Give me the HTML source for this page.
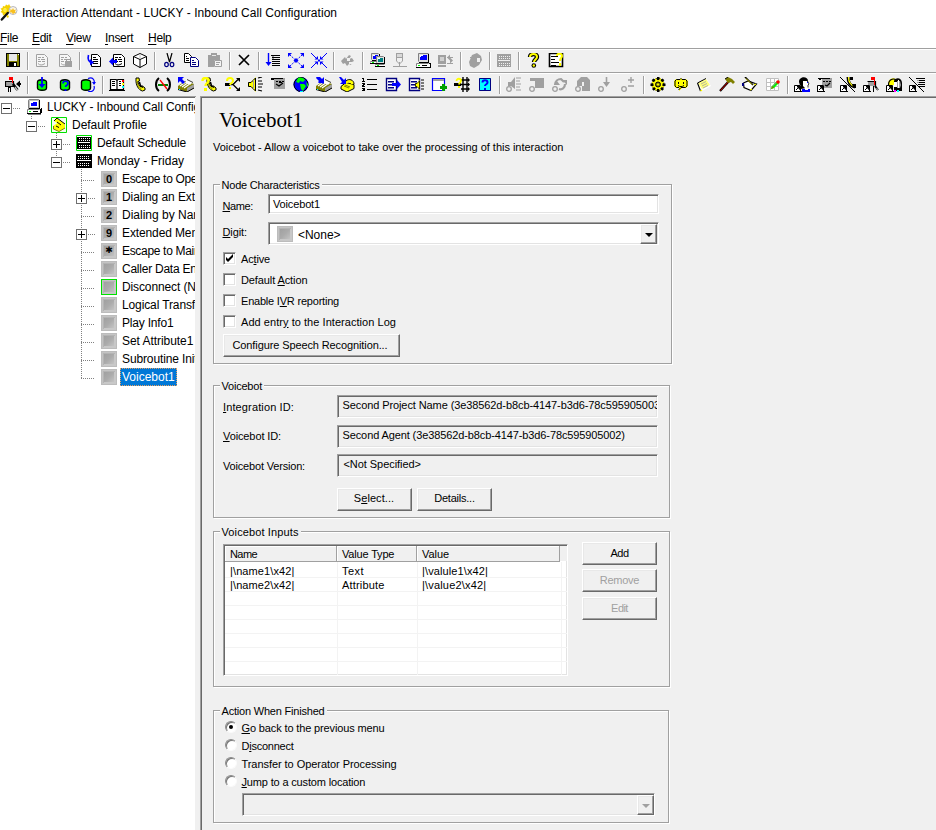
<!DOCTYPE html>
<html>
<head>
<meta charset="utf-8">
<title>Interaction Attendant - LUCKY - Inbound Call Configuration</title>
<style>
html,body{margin:0;padding:0;}
body{width:936px;height:830px;overflow:hidden;background:#f0f0f0;position:relative;font-family:"Liberation Sans",sans-serif;color:#000;}
.abs{position:absolute;}
.t{position:absolute;white-space:nowrap;line-height:1;}
u{text-decoration:underline;text-underline-offset:1px;}
.sg{font-size:12px;}
.tr{letter-spacing:-0.12px;}
.th{font-size:11px;}
svg.ic{position:absolute;overflow:hidden;}
.sep{position:absolute;width:1px;height:18px;background:#a0a0a0;box-shadow:1px 0 0 #fff;}
#title{left:0;top:0;width:936px;height:27px;background:#fff;}
#menu{left:0;top:27px;width:936px;height:21px;background:#fff;}
#tbs{left:0;top:48px;width:936px;height:48px;background:#f0f0f0;}
#tree{left:0;top:98px;width:195px;height:732px;background:#fff;overflow:hidden;}
#right{left:200px;top:96px;width:736px;height:734px;background:#f0f0f0;overflow:hidden;}
.exp{position:absolute;width:11px;height:11px;box-sizing:border-box;border:1px solid #707070;background:#fff;}
.exp i{position:absolute;left:1px;top:4px;width:7px;height:1px;background:#000;}
.exp b{position:absolute;left:4px;top:1px;width:1px;height:7px;background:#000;}
.hd{position:absolute;height:1px;background:repeating-linear-gradient(90deg,#808080 0 1px,transparent 1px 2px);}
.vd{position:absolute;width:1px;background:repeating-linear-gradient(180deg,#808080 0 1px,transparent 1px 2px);}
.key{position:absolute;width:16px;height:16px;box-sizing:border-box;border:1px solid #bcbcbc;background:linear-gradient(135deg,#9c9c9c 0%,#ababab 50%,#cdcdcd 100%);box-shadow:inset 1px 1px 0 #c4c4c4,inset -1px -1px 0 #c8c8c8,inset 2px 2px 0 #b4b4b4,inset -2px -2px 0 #c8c8c8;}
.key span{position:absolute;left:0;right:0;top:0;text-align:center;font-weight:bold;font-size:11px;line-height:14px;}
.key span.ast{font-family:"DejaVu Sans",sans-serif;font-size:9px;font-weight:normal;line-height:13px;}
.sel{position:absolute;height:18px;box-sizing:border-box;background:#0078d7;color:#fff;border:1px dotted #e8a060;padding:1px 1px 0 1px;white-space:nowrap;}
.sel span{line-height:15px;display:block;margin-top:0px;}
.grp{position:absolute;border:1px solid #a0a0a0;box-shadow:1px 1px 0 #fff, inset 1px 1px 0 #fff;box-sizing:border-box;}
.grp>.lbl{position:absolute;left:5.5px;top:-6px;background:#f0f0f0;padding:0 2px;font-size:11px;line-height:13px;white-space:nowrap;}
.sunk{position:absolute;box-sizing:border-box;border:1px solid;border-color:#a0a0a0 #fff #fff #a0a0a0;box-shadow:inset 1px 1px 0 #696969, inset -1px -1px 0 #e3e3e3;}
.btn{position:absolute;box-sizing:border-box;border:1px solid;border-color:#fff #696969 #696969 #fff;box-shadow:inset -1px -1px 0 #a0a0a0, inset 1px 1px 0 #e8e8e8;background:#f0f0f0;text-align:center;font-size:11px;}
.btn span{position:absolute;left:0;right:0;text-align:center;white-space:nowrap;line-height:13px;}
.cb{position:absolute;width:13px;height:13px;box-sizing:border-box;background:#fff;border:1px solid;border-color:#a0a0a0 #fff #fff #a0a0a0;box-shadow:inset 1px 1px 0 #696969, inset -1px -1px 0 #e3e3e3;}
.rd{position:absolute;width:12px;height:12px;box-sizing:border-box;border-radius:50%;background:#fff;border:1px solid;border-color:#8a8a8a #fafafa #fafafa #8a8a8a;box-shadow:inset 1px 1px 0 #767676;}
#list .hdc{border-right:1px solid #a0a0a0;border-bottom:1px solid #a0a0a0;box-sizing:border-box;box-shadow:inset 1px 1px 0 #fff;}
#grid{background:
 linear-gradient(#f3f3f3,#f3f3f3) 112px 0/1px 100% no-repeat,
 linear-gradient(#f3f3f3,#f3f3f3) 192px 0/1px 100% no-repeat,
 linear-gradient(#f3f3f3,#f3f3f3) 336px 0/1px 100% no-repeat,
 repeating-linear-gradient(180deg,transparent 0 13px,#f3f3f3 13px 14px) 0 2px;}
</style>
</head>
<body>
<div id="title" class="abs"><svg class="abs" style="left:0px;top:4px" width="18" height="18" viewBox="0 0 18 18"><path d="M3 2l2 .5 1-2 2 1 1-1.500 1 2 1 1-2 3 1 2-2 1-1 3-2-1.500-2 1-.5-2.500-2-1 1.500-1.500-1.500-2 2-.5z" fill="#f4d000"/><path d="M4 4l2 0 1 2-1 2-2 0-1-2z" fill="#ffee40"/><circle cx="13" cy="6.500" r="4" fill="#fbf6e8" stroke="#b8b8c0" stroke-width="1"/><path d="M10.500 5l1.500 1 1-2 1 2 2-.5-1 2 1 1.500-2 0-1 1.500-1-2-2 0z" fill="#f8c020"/><path d="M1.800 15.500l6-6.500" stroke="#111" stroke-width="2.400" stroke-linecap="round" fill="none"/><path d="M7 11l2 1-1 2-1.500-1z" fill="#f4d000"/></svg><div class="t sg" style="left:22px;top:6px;line-height:15px;letter-spacing:0.03px">Interaction Attendant - LUCKY - Inbound Call Configuration</div></div>
<div id="menu" class="abs"><div class="t sg" style="left:0px;top:4px;line-height:15px;letter-spacing:-0.3px"><u style="text-underline-offset:1.500px">F</u>ile</div><div class="t sg" style="left:32px;top:4px;line-height:15px;letter-spacing:-0.3px"><u style="text-underline-offset:1.500px">E</u>dit</div><div class="t sg" style="left:66px;top:4px;line-height:15px;letter-spacing:-0.3px"><u style="text-underline-offset:1.500px">V</u>iew</div><div class="t sg" style="left:105px;top:4px;line-height:15px;letter-spacing:-0.3px"><u style="text-underline-offset:1.500px">I</u>nsert</div><div class="t sg" style="left:148px;top:4px;line-height:15px;letter-spacing:-0.3px"><u style="text-underline-offset:1.500px">H</u>elp</div></div>
<div id="tbs" class="abs"><div class="abs" style="left:0;top:0;width:936px;height:1px;background:#a0a0a0"></div><div class="abs" style="left:0;top:1px;width:936px;height:1px;background:#fff"></div><div class="abs" style="left:0;top:24px;width:936px;height:1px;background:#a0a0a0"></div><div class="abs" style="left:0;top:25px;width:936px;height:1px;background:#fff"></div><svg class="ic" style="left:5px;top:5px" width="16" height="15" viewBox="0 0 16 15"><rect x="1" y="0" width="14" height="14" fill="#000"/><rect x="2" y="1" width="12" height="12" fill="#808000"/><rect x="4" y="1" width="8" height="7" fill="#e8e8e8"/><rect x="4" y="9" width="8" height="5" fill="#000"/><rect x="9" y="10" width="2" height="3" fill="#fff"/><rect x="13" y="1" width="1" height="1" fill="#fff"/></svg><div class="sep" style="left:27px;top:4px"></div><svg class="ic" style="left:34px;top:5px" width="16" height="15" viewBox="0 0 16 15"><path d="M2 1h9l3 3v10h-12z" fill="#f6f6f6"/><path d="M2.5 1.5h8l3 3v9h-11z" fill="none" stroke="#a0a0a0" stroke-width="1" /><rect x="4" y="4" width="3" height="1" fill="#a0a0a0"/><rect x="8" y="4" width="2" height="1" fill="#a0a0a0"/><rect x="4" y="6" width="2" height="1" fill="#a0a0a0"/><rect x="7" y="6" width="4" height="1" fill="#a0a0a0"/><rect x="4" y="8" width="3" height="1" fill="#a0a0a0"/><rect x="8" y="8" width="3" height="1" fill="#a0a0a0"/><path d="M4 10.5c2 2 4 2 7 0" fill="none" stroke="#a0a0a0" stroke-width="1" /></svg><svg class="ic" style="left:57px;top:5px" width="16" height="15" viewBox="0 0 16 15"><path d="M2 1h9l3 3v10h-12z" fill="#f6f6f6"/><path d="M2.5 1.5h8l3 3v9h-11z" fill="none" stroke="#a0a0a0" stroke-width="1" /><rect x="4" y="4" width="3" height="1" fill="#a0a0a0"/><rect x="8" y="4" width="2" height="1" fill="#a0a0a0"/><rect x="4" y="6" width="2" height="1" fill="#a0a0a0"/><rect x="7" y="6" width="4" height="1" fill="#a0a0a0"/><rect x="4" y="8" width="3" height="1" fill="#a0a0a0"/><rect x="8" y="8" width="3" height="1" fill="#a0a0a0"/><path d="M4 10.5c2 2 4 2 7 0" fill="none" stroke="#a0a0a0" stroke-width="1" /><rect x="8" y="8" width="7" height="6" fill="#a0a0a0"/><rect x="9" y="6" width="5" height="3" fill="#a0a0a0"/><rect x="10" y="7" width="3" height="1" fill="#f0f0f0"/></svg><div class="sep" style="left:79px;top:4px"></div><svg class="ic" style="left:86px;top:5px" width="16" height="15" viewBox="0 0 16 15"><path d="M5 1h7l3 3v10h-10z" fill="#fff"/><path d="M5.5 1.5h6l3 3v9h-9z" fill="none" stroke="#000" stroke-width="1" /><rect x="7" y="4" width="3" height="1" fill="#000"/><rect x="7" y="6" width="5" height="1" fill="#000"/><rect x="7" y="8" width="5" height="1" fill="#000"/><rect x="7" y="10" width="5" height="1" fill="#000"/><path d="M2.5 2c-1 4 0 7 3.5 7.5" fill="none" stroke="#0000ff" stroke-width="1.6" /><path d="M4 6l4 3.5-4 3z" fill="#0000ff"/></svg><svg class="ic" style="left:109px;top:5px" width="16" height="15" viewBox="0 0 16 15"><path d="M4 1h9l3 3v10h-12z" fill="#fff"/><path d="M4.5 1.5h8l3 3v9h-11z" fill="none" stroke="#000" stroke-width="1" /><rect x="6" y="4" width="3" height="1" fill="#000"/><rect x="10" y="4" width="2" height="1" fill="#000"/><rect x="6" y="6" width="2" height="1" fill="#000"/><rect x="9" y="6" width="4" height="1" fill="#000"/><rect x="6" y="8" width="3" height="1" fill="#000"/><rect x="10" y="8" width="3" height="1" fill="#000"/><path d="M6 10.5c2 2 4 2 7 0" fill="none" stroke="#000" stroke-width="1" /><path d="M0 8.5l4-4v2.500h4v3h-4v2.5z" fill="#0000ff"/></svg><svg class="ic" style="left:132px;top:5px" width="16" height="15" viewBox="0 0 16 15"><path d="M8 0l7 3v8l-7 4-7-4v-8z" fill="#fff"/><path d="M8 .5l6.500 3v7.500l-6.500 3.500-6.500-3.500v-7.500z M1.5 3.500l6.500 3 6.500-3 M8 6.500v8" fill="none" stroke="#000" stroke-width="1" /><path d="M8 1v5" fill="none" stroke="#c0c0c0" stroke-width="1" /></svg><div class="sep" style="left:154px;top:4px"></div><svg class="ic" style="left:161px;top:5px" width="16" height="15" viewBox="0 0 16 15"><path d="M6 0l2.500 9M11 0l-2.500 9" fill="none" stroke="#000" stroke-width="1.2" /><ellipse cx="5.5" cy="11.5" rx="1.8" ry="2.2" fill="none" stroke="#000080" stroke-width="1.2"/><ellipse cx="11" cy="11.5" rx="1.8" ry="2.2" fill="none" stroke="#000080" stroke-width="1.2"/></svg><svg class="ic" style="left:184px;top:5px" width="16" height="15" viewBox="0 0 16 15"><path d="M0 0h5l3 3v7h-8z" fill="#fff"/><path d="M0.5 0.5h4l3 3v6h-7z" fill="none" stroke="#000" stroke-width="1" /><rect x="2" y="3" width="1" height="1" fill="#000"/><rect x="2" y="5" width="3" height="1" fill="#000"/><rect x="2" y="7" width="3" height="1" fill="#000"/><path d="M6 4h6l3 3v7h-9z" fill="#fff"/><path d="M6.5 4.5h5l3 3v6h-8z" fill="none" stroke="#000080" stroke-width="1" /><rect x="8" y="7" width="2" height="1" fill="#000080"/><rect x="8" y="9" width="4" height="1" fill="#000080"/><rect x="8" y="11" width="4" height="1" fill="#000080"/></svg><svg class="ic" style="left:207px;top:5px" width="16" height="15" viewBox="0 0 16 15"><rect x="1" y="2" width="12" height="12" fill="#a0a0a0"/><rect x="4" y="0" width="6" height="3" fill="#a0a0a0"/><rect x="5" y="2" width="4" height="1" fill="#e8e8e8"/><rect x="7" y="7" width="8" height="7" fill="#f4f4f4"/><path d="M7.500 7.500h7v6h-7z" fill="none" stroke="#a0a0a0" stroke-width="1" /><rect x="9" y="9" width="4" height="1" fill="#a0a0a0"/><rect x="9" y="11" width="3" height="1" fill="#a0a0a0"/></svg><div class="sep" style="left:229px;top:4px"></div><svg class="ic" style="left:236px;top:5px" width="16" height="15" viewBox="0 0 16 15"><path d="M3 2l10 10M13 2l-10 10" fill="none" stroke="#000" stroke-width="1.7" /></svg><div class="sep" style="left:258px;top:4px"></div><svg class="ic" style="left:265px;top:5px" width="16" height="15" viewBox="0 0 16 15"><path d="M3.500 0v11" fill="none" stroke="#0000ff" stroke-width="1.4" /><path d="M0.500 9h6l-3 4z" fill="#0000ff"/><rect x="6" y="2" width="9" height="1" fill="#000"/><rect x="7" y="4" width="8" height="1" fill="#000"/><rect x="7" y="6" width="8" height="1" fill="#000"/><rect x="7" y="8" width="8" height="1" fill="#000"/><rect x="7" y="10" width="8" height="1" fill="#000"/><rect x="7" y="12" width="8" height="1" fill="#000"/><rect x="7" y="3" width="2" height="1" fill="#a0a0a0"/><rect x="7" y="5" width="2" height="1" fill="#a0a0a0"/></svg><svg class="ic" style="left:288px;top:5px" width="16" height="15" viewBox="0 0 16 15"><path d="M2 2l12 11M14 2l-12 11" fill="none" stroke="#0000ff" stroke-width="1" stroke-dasharray="1.5 1"/><path d="M0 0h4l-4 4zM16 0h-4l4 4zM0 15h4l-4-4zM16 15h-4l4-4z" fill="#0000ff"/><path d="M8 5l2.500 2.500-2.500 2.500-2.500-2.500z" fill="#0000ff"/></svg><svg class="ic" style="left:311px;top:5px" width="16" height="15" viewBox="0 0 16 15"><path d="M0 0l5 5M16 0l-5 5M0 15l5-5M16 15l-5-5" fill="none" stroke="#0000ff" stroke-width="1" /><path d="M3.500 6.500h3.500v-3.500zM12.500 6.500h-3.500v-3.500zM3.500 8.500h3.500v3.500zM12.500 8.500h-3.500v3.500z" fill="#0000ff"/><rect x="7" y="6.5" width="2" height="2" fill="#0000ff"/></svg><div class="sep" style="left:333px;top:4px"></div><svg class="ic" style="left:340px;top:5px" width="16" height="15" viewBox="0 0 16 15"><path d="M1 8l4-4 1 2 3-4 2 1-2 3 3-1 2 3-2 1-1 3-2-1-2 2-2-3-2 1z" fill="#a0a0a0"/><rect x="7" y="5" width="3" height="3" fill="#f0f0f0"/><rect x="9" y="9" width="3" height="2" fill="#f0f0f0"/></svg><div class="sep" style="left:362px;top:4px"></div><svg class="ic" style="left:369px;top:5px" width="16" height="15" viewBox="0 0 16 15"><rect x="2" y="0" width="8" height="7" fill="#e0e0e0"/><path d="M2.5 6.5v-6h7" fill="none" stroke="#808080" stroke-width="1" /><rect x="10" y="1" width="1" height="7" fill="#000"/><rect x="3" y="7" width="8" height="1" fill="#000"/><rect x="4" y="2" width="5" height="4" fill="#0000ff"/><rect x="4" y="2" width="2" height="1" fill="#fff"/><rect x="1" y="8" width="10" height="2" fill="#fff"/><path d="M1.5 9.5v-1h9" fill="none" stroke="#808080" stroke-width="1" /><rect x="11" y="8" width="1" height="3" fill="#000"/><rect x="1" y="10" width="11" height="1" fill="#000"/><rect x="3" y="9" width="2" height="1" fill="#00ff00"/><rect x="7" y="3" width="8" height="7" fill="#e0e0e0"/><path d="M7.5 9.5v-6h7" fill="none" stroke="#808080" stroke-width="1" /><rect x="15" y="4" width="1" height="7" fill="#000"/><rect x="8" y="10" width="8" height="1" fill="#000"/><rect x="9" y="5" width="5" height="4" fill="#008080"/><rect x="9" y="5" width="2" height="1" fill="#fff"/><rect x="6" y="11" width="10" height="2" fill="#fff"/><path d="M6.5 12.5v-1h9" fill="none" stroke="#808080" stroke-width="1" /><rect x="16" y="11" width="1" height="3" fill="#000"/><rect x="6" y="13" width="11" height="1" fill="#000"/><rect x="8" y="12" width="2" height="1" fill="#00ff00"/></svg><svg class="ic" style="left:392px;top:5px" width="16" height="15" viewBox="0 0 16 15"><rect x="4" y="0" width="7" height="5" fill="#a0a0a0"/><rect x="5" y="1" width="5" height="3" fill="#d8d8d8"/><path d="M4.500 5v3l3 3M10.500 5v3l-3 3M7.500 9v5" fill="none" stroke="#a0a0a0" stroke-width="1" /><rect x="1" y="13" width="14" height="1" fill="#a0a0a0"/></svg><svg class="ic" style="left:415px;top:5px" width="16" height="15" viewBox="0 0 16 15"><rect x="3" y="0" width="11" height="9" fill="#e0e0e0"/><path d="M3.500 8.500v-8h10" fill="none" stroke="#808080" stroke-width="1" /><rect x="13" y="1" width="1" height="9" fill="#000"/><rect x="4" y="9" width="10" height="1" fill="#000"/><rect x="5" y="2" width="7" height="5" fill="#0000ff"/><rect x="5" y="2" width="3" height="1" fill="#fff"/><rect x="5" y="3" width="1" height="1" fill="#fff"/><rect x="1" y="10" width="14" height="4" fill="#fff"/><path d="M1.500 13.500v-3h12" fill="none" stroke="#808080" stroke-width="1" /><rect x="3" y="12" width="2" height="1" fill="#00ff00"/><rect x="7" y="12" width="5" height="1" fill="#000"/><rect x="1" y="14" width="15" height="1" fill="#000"/><rect x="15" y="10" width="1" height="5" fill="#000"/><rect x="14" y="10" width="1" height="1" fill="#000"/></svg><svg class="ic" style="left:438px;top:5px" width="16" height="15" viewBox="0 0 16 15"><rect x="0" y="2" width="8" height="9" fill="#a0a0a0"/><rect x="2" y="4" width="4" height="4" fill="#d0d0d0"/><rect x="0" y="12" width="8" height="2" fill="#a0a0a0"/><path d="M9 4.500h6M9 10.500h6" fill="none" stroke="#a0a0a0" stroke-width="1.2" /><path d="M15 7.500l-3 3v-6zM9 4.500l3-3v6z" fill="#a0a0a0"/></svg><div class="sep" style="left:460px;top:4px"></div><svg class="ic" style="left:467px;top:5px" width="16" height="15" viewBox="0 0 16 15"><path d="M2 9l3-7 5-2 4 3 1 4-3 5-5 3-4-2z" fill="#a0a0a0"/><rect x="10" y="5" width="3" height="4" fill="#f0f0f0"/><path d="M3 4l5 5M5 2l5 5" fill="none" stroke="#a0a0a0" stroke-width="1" /></svg><div class="sep" style="left:489px;top:4px"></div><svg class="ic" style="left:496px;top:5px" width="16" height="15" viewBox="0 0 16 15"><rect x="1" y="1" width="14" height="13" fill="#a0a0a0"/><rect x="3" y="3" width="1" height="1" fill="#f0f0f0"/><rect x="5" y="3" width="1" height="1" fill="#f0f0f0"/><rect x="7" y="3" width="1" height="1" fill="#f0f0f0"/><rect x="9" y="3" width="1" height="1" fill="#f0f0f0"/><rect x="11" y="3" width="1" height="1" fill="#f0f0f0"/><rect x="13" y="3" width="1" height="1" fill="#f0f0f0"/><rect x="3" y="5" width="1" height="1" fill="#f0f0f0"/><rect x="5" y="5" width="1" height="1" fill="#f0f0f0"/><rect x="7" y="5" width="1" height="1" fill="#f0f0f0"/><rect x="9" y="5" width="1" height="1" fill="#f0f0f0"/><rect x="11" y="5" width="1" height="1" fill="#f0f0f0"/><rect x="13" y="5" width="1" height="1" fill="#f0f0f0"/><rect x="3" y="10" width="1" height="1" fill="#f0f0f0"/><rect x="5" y="10" width="1" height="1" fill="#f0f0f0"/><rect x="7" y="10" width="1" height="1" fill="#f0f0f0"/><rect x="9" y="10" width="1" height="1" fill="#f0f0f0"/><rect x="11" y="10" width="1" height="1" fill="#f0f0f0"/><rect x="13" y="10" width="1" height="1" fill="#f0f0f0"/><rect x="3" y="12" width="1" height="1" fill="#f0f0f0"/><rect x="5" y="12" width="1" height="1" fill="#f0f0f0"/><rect x="7" y="12" width="1" height="1" fill="#f0f0f0"/><rect x="9" y="12" width="1" height="1" fill="#f0f0f0"/><rect x="11" y="12" width="1" height="1" fill="#f0f0f0"/><rect x="13" y="12" width="1" height="1" fill="#f0f0f0"/><rect x="2" y="7" width="12" height="1" fill="#f0f0f0"/></svg><div class="sep" style="left:518px;top:4px"></div><svg class="ic" style="left:525px;top:5px" width="16" height="15" viewBox="0 0 16 15"><path d="M5 4c0-4 7-4 7 0 0 2-3 3-3 5" fill="none" stroke="#000" stroke-width="4.4" /><path d="M5 4c0-4 7-4 7 0 0 2-3 3-3 5" fill="none" stroke="#ffff00" stroke-width="2" /><circle cx="8.8" cy="12.5" r="2.3" fill="#000"/><circle cx="8.8" cy="12.5" r="1.2" fill="#ffff00"/></svg><svg class="ic" style="left:548px;top:5px" width="16" height="15" viewBox="0 0 16 15"><rect x="1" y="0" width="14" height="14" fill="#fff"/><path d="M1.500 .5h13v13h-13z" fill="none" stroke="#000" stroke-width="1.6" /><rect x="3" y="3" width="7" height="1" fill="#000"/><rect x="3" y="6" width="4" height="1" fill="#000"/><rect x="3" y="9" width="8" height="1" fill="#000"/><rect x="3" y="12" width="5" height="1" fill="#000"/><path d="M9 3c0-3 5-3 5 0 0 2-2 2-2 5" fill="none" stroke="#ffff00" stroke-width="2" /><rect x="11" y="10" width="2" height="3" fill="#ffff00"/></svg>
<svg class="ic" style="left:5px;top:29px" width="16" height="15" viewBox="0 0 16 15"><rect x="0" y="5" width="9" height="5" fill="#a0a0a0"/><path d="M.5 4.500h8v5h-8z" fill="none" stroke="#000" stroke-width="1.2" /><rect x="4" y="0" width="4" height="3" fill="#ff0000"/><rect x="7" y="0" width="1" height="6" fill="#ff0000"/><rect x="3" y="10" width="1" height="5" fill="#000"/><rect x="5" y="10" width="1" height="5" fill="#000"/><rect x="3" y="10" width="3" height="1" fill="#000"/><path d="M11 7l4-3.500v2.500h1v2h-1v2.500z" fill="#000"/><path d="M8 7l4.500 6" fill="none" stroke="#000" stroke-width="2.6" /><path d="M10 10l2.500 3.500" fill="none" stroke="#c0c0c0" stroke-width="1.4" /></svg><div class="sep" style="left:27px;top:28px"></div><svg class="ic" style="left:34px;top:29px" width="16" height="15" viewBox="0 0 16 15"><path d="M3 5c0-3.500 10-3.500 10 0v6c0 3.500-10 3.500-10 0z" fill="#00ff00"/><path d="M3.5 5c0-3 9-3 9 0v6c0 3-9 3-9 0z" fill="none" stroke="#000" stroke-width="1.4" /><path d="M8 0v9" fill="none" stroke="#0000ff" stroke-width="1.8" /><path d="M4.500 7h7l-3.500 4z" fill="#0000ff"/></svg><svg class="ic" style="left:57px;top:29px" width="16" height="15" viewBox="0 0 16 15"><path d="M3 5c0-3.500 10-3.500 10 0v6c0 3.500-10 3.500-10 0z" fill="#00ff00"/><path d="M3.5 5c0-3 9-3 9 0v6c0 3-9 3-9 0z" fill="none" stroke="#000" stroke-width="1.4" /><path d="M6 6.500c0-3 5-3 5 0 0 2-2.500 1.500-2.500 3.500" fill="none" stroke="#0000ff" stroke-width="1.7" /><rect x="7.5" y="12" width="2" height="2" fill="#0000ff"/></svg><svg class="ic" style="left:80px;top:29px" width="16" height="15" viewBox="0 0 16 15"><path d="M1 5c0-3.500 10-3.500 10 0v6c0 3.500-10 3.500-10 0z" fill="#00ff00"/><path d="M1.5 5c0-3 9-3 9 0v6c0 3-9 3-9 0z" fill="none" stroke="#000" stroke-width="1.4" /><path d="M8 1.500c5-2 7 2 6 5M8 14c5 2 7-2 6-5" fill="none" stroke="#0000ff" stroke-width="1.2" /><path d="M12 5h4l-2 3z" fill="#0000ff"/></svg><div class="sep" style="left:102px;top:28px"></div><svg class="ic" style="left:109px;top:29px" width="16" height="15" viewBox="0 0 16 15"><path d="M1 2h6l1 1 1-1h6v11h-14z" fill="#fff"/><path d="M1.500 2.500h5.500l1 1 1-1h5.500v10h-13z M8 3.500v9" fill="none" stroke="#000" stroke-width="1.2" /><rect x="0" y="13" width="16" height="1" fill="#000"/><rect x="3" y="4" width="3" height="1" fill="#000"/><rect x="3" y="6" width="3" height="1" fill="#000"/><rect x="3" y="8" width="3" height="1" fill="#000"/><rect x="10" y="4" width="2" height="1" fill="#000"/><rect x="10" y="6" width="2" height="1" fill="#000"/><rect x="10" y="8" width="2" height="1" fill="#000"/><rect x="13" y="3" width="2" height="2" fill="#ff0000"/><rect x="13" y="6" width="2" height="2" fill="#ffff00"/><rect x="13" y="9" width="2" height="2" fill="#00ffff"/></svg><svg class="ic" style="left:132px;top:29px" width="16" height="15" viewBox="0 0 16 15"><path d="M4 1h3l.5 3-1.500 .5c0 2 1 4 3 5.500l1.500-1 2.500 2v2l-2.500 1c-4-1-7-6-6.500-12z" fill="#ffff00"/><path d="M4 1h3l.5 3-1.500 .5c0 2 1 4 3 5.500l1.500-1 2.500 2v2l-2.500 1c-4-1-7-6-6.500-12z" fill="none" stroke="#000" stroke-width="1" /><path d="M5.5 4c-.5 3 1 6 4 8" fill="none" stroke="#808000" stroke-width="1" /><path d="M7.5 5c0 2 1 4 3.500 5.500" fill="none" stroke="#000" stroke-width="1.4" /></svg><svg class="ic" style="left:155px;top:29px" width="16" height="15" viewBox="0 0 16 15"><path d="M4 1c-4 3-4 10 0 13M12 1c4 3 4 10 0 13" fill="none" stroke="#000" stroke-width="2" /><rect x="3" y="7" width="10" height="2" fill="#008000"/><path d="M5 3l7 9" fill="none" stroke="#ff0000" stroke-width="1.3" /></svg><svg class="ic" style="left:178px;top:29px" width="16" height="15" viewBox="0 0 16 15"><path d="M0 9l7-5 9 3v4l-7 4-9-3z" fill="#808000"/><path d="M9 11l7-4v4l-7 4z" fill="#a0a0a0"/><path d="M9 2l6 3-3 3-5-2z" fill="#fff"/><path d="M9 2.500l6 3" fill="none" stroke="#000" stroke-width="0.8" /><path d="M2 9l5-3.500M4 10l5-3.500M6 11l5-3.500" fill="none" stroke="#fff" stroke-width="1.2" /><path d="M0 12.500l9 2.500 7-4" fill="none" stroke="#000" stroke-width="1" /><rect x="1" y="12" width="1" height="1" fill="#00ffff"/><path d="M0 0h6l-2 2 3 3-2 2-3-3-2 2z" fill="#0000ff"/></svg><svg class="ic" style="left:201px;top:29px" width="16" height="15" viewBox="0 0 16 15"><path d="M6 1h3l.5 3-1.500 .5c0 2 1 4 3 5.500l1.500-1 2.500 2v2l-2.500 1c-4-1-7-6-6.500-12z" fill="#ffff00"/><path d="M6 1h3l.5 3-1.500 .5c0 2 1 4 3 5.500l1.500-1 2.500 2v2l-2.500 1c-4-1-7-6-6.500-12z" fill="none" stroke="#000" stroke-width="1" /><path d="M7.5 4c-.5 3 1 6 4 8" fill="none" stroke="#808000" stroke-width="1" /><path d="M9.5 5c0 2 1 4 3.500 5.500" fill="none" stroke="#000" stroke-width="1.4" /><path d="M1.500 4c0-4 6-4 6 0 0 2-3 2-3 5" fill="none" stroke="#ffff00" stroke-width="2.4" /><rect x="3" y="11" width="3" height="3" fill="#ffff00"/></svg><svg class="ic" style="left:224px;top:29px" width="16" height="15" viewBox="0 0 16 15"><path d="M3 7.500h6M9 7.500l5-5M9 7.500l5 5" fill="none" stroke="#000" stroke-width="1.3" /><path d="M12 1h4v4zM12 14h4v-4z" fill="#000"/><rect x="1" y="6" width="5" height="3" fill="#000"/><path d="M3 4c0-4 6-4 6 0 0 2-3 2-3 4" fill="none" stroke="#ffff00" stroke-width="2" /><rect x="5" y="10" width="2" height="2" fill="#ffff00"/></svg><svg class="ic" style="left:247px;top:29px" width="16" height="15" viewBox="0 0 16 15"><path d="M1 5h3l5-5v15l-5-5h-3z" fill="#ffff00"/><path d="M1.500 5.500h2.500l4.500-4.500v13l-4.500-4.500h-2.500z" fill="none" stroke="#000" stroke-width="1" /><path d="M6.500 3v9" fill="none" stroke="#a0a0a0" stroke-width="1" /><path d="M11 1l4 -1M11 4h4M11 7h5M11 10h4M11 13l4 1" fill="none" stroke="#000" stroke-width="1.2" /></svg><svg class="ic" style="left:270px;top:29px" width="16" height="15" viewBox="0 0 16 15"><rect x="4" y="1" width="11" height="11" fill="#a0a0a0"/><rect x="1" y="1" width="12" height="1" fill="#000"/><rect x="1" y="1" width="3" height="2" fill="#000"/><rect x="6" y="4" width="2" height="1" fill="#000"/><rect x="9" y="4" width="2" height="1" fill="#000"/><rect x="12" y="4" width="2" height="1" fill="#000"/><path d="M6 7l3 2 4-3" fill="none" stroke="#000" stroke-width="1.2" /><rect x="9" y="5" width="3" height="1" fill="#000"/></svg><svg class="ic" style="left:293px;top:29px" width="16" height="15" viewBox="0 0 16 15"><circle cx="8" cy="7.5" r="7.5" fill="#0000ff"/><circle cx="8" cy="7.5" r="7" fill="none" stroke="#000" stroke-width="1"/><path d="M5 1c3-1 6 0 7 2l-2 2-3-1-1 2-3-1z" fill="#00ff00"/><path d="M7 7l4 0 2 2-3 5-2-2z" fill="#00ff00"/><path d="M13 5l2 2v3l-1-1z" fill="#00ff00"/><rect x="7" y="14" width="3" height="1" fill="#00ffff"/></svg><svg class="ic" style="left:316px;top:29px" width="16" height="15" viewBox="0 0 16 15"><path d="M0 9l7-5 9 3v4l-7 4-9-3z" fill="#808000"/><path d="M9 11l7-4v4l-7 4z" fill="#a0a0a0"/><path d="M9 2l6 3-3 3-5-2z" fill="#fff"/><path d="M9 2.500l6 3" fill="none" stroke="#000" stroke-width="0.8" /><path d="M2 9l5-3.500M4 10l5-3.500M6 11l5-3.500" fill="none" stroke="#fff" stroke-width="1.2" /><path d="M0 12.500l9 2.500 7-4" fill="none" stroke="#000" stroke-width="1" /><rect x="1" y="12" width="1" height="1" fill="#00ffff"/><path d="M0 0l2-2 4 4 2-2v6h-6l2-2z" fill="#0000ff"/><path d="M1 0l3 3 1-1 3 5-6-2 1-1-3-3z" fill="#0000ff"/></svg><svg class="ic" style="left:339px;top:29px" width="16" height="15" viewBox="0 0 16 15"><path d="M2 9l5-4 8 2v4l-7 4-6-3z" fill="#ffff00"/><path d="M2 9.500l5-4 8 2v4l-7 3.500-6-3z" fill="none" stroke="#000" stroke-width="1" /><path d="M7 4c3-3 8-1 8 3l-3 0c0-2-3-2-5 0z" fill="#ffff00"/><path d="M7 4c3-3 8-1 8 3" fill="none" stroke="#000" stroke-width="1" /><path d="M5 9l5 2M6 8l5 2" fill="none" stroke="#808000" stroke-width="1" /><path d="M0 0l1-1 4 4 2-2v6h-6l2-2z" fill="#0000ff"/></svg><svg class="ic" style="left:362px;top:29px" width="16" height="15" viewBox="0 0 16 15"><rect x="1" y="1" width="1" height="3" fill="#000"/><rect x="0" y="1" width="1" height="1" fill="#000"/><rect x="0" y="4" width="3" height="1" fill="#000"/><rect x="0" y="6" width="3" height="1" fill="#000"/><rect x="1" y="7" width="2" height="1" fill="#000"/><rect x="0" y="8" width="2" height="1" fill="#000"/><rect x="0" y="9" width="3" height="1" fill="#000"/><rect x="0" y="11" width="3" height="1" fill="#000"/><rect x="1" y="12" width="2" height="1" fill="#000"/><rect x="0" y="13" width="3" height="1" fill="#000"/><rect x="5" y="2" width="10" height="1" fill="#000"/><rect x="5" y="7" width="10" height="1" fill="#000"/><rect x="5" y="12" width="10" height="1" fill="#000"/></svg><svg class="ic" style="left:385px;top:29px" width="16" height="15" viewBox="0 0 16 15"><rect x="1" y="1" width="11" height="13" fill="#fff"/><path d="M1.500 1.500h10v12h-10z" fill="none" stroke="#000080" stroke-width="1.4" /><rect x="3" y="4" width="6" height="1.5" fill="#000080"/><rect x="3" y="7" width="5" height="1.5" fill="#000080"/><rect x="3" y="10" width="6" height="1.5" fill="#000080"/><path d="M7 6h5v-3l4 4.500-4 4.500v-3h-5z" fill="#0000ff"/></svg><svg class="ic" style="left:408px;top:29px" width="16" height="15" viewBox="0 0 16 15"><rect x="1" y="1" width="11" height="13" fill="#fff"/><path d="M1.500 1.500h10v12h-10z" fill="none" stroke="#000080" stroke-width="1.4" /><rect x="3" y="4" width="6" height="1.5" fill="#000080"/><rect x="3" y="7" width="5" height="1.5" fill="#000080"/><rect x="3" y="10" width="6" height="1.5" fill="#000080"/><path d="M7 6h2l3-3v10l-3-3h-2z" fill="#ffff00"/><path d="M7.500 6.500h1.500l2.500-2.500v8l-2.500-2.500h-1.500z" fill="none" stroke="#000" stroke-width="0.8" /><path d="M13 3h3M13 6h3M13 9h3M13 12h3" fill="none" stroke="#000" stroke-width="1.2" /></svg><svg class="ic" style="left:431px;top:29px" width="16" height="15" viewBox="0 0 16 15"><rect x="1" y="1" width="13" height="13" fill="#fff"/><path d="M1.500 1.500h12v12h-12z" fill="none" stroke="#0000ff" stroke-width="1.2" /><rect x="2" y="2" width="11" height="2" fill="#a0a0a0"/><path d="M9 9h2v-2h3v2h2v3h-2v2h-3v-2h-2z" fill="#00a000"/></svg><svg class="ic" style="left:454px;top:29px" width="16" height="15" viewBox="0 0 16 15"><path d="M9 0v15M13 0v15M7 3h8M7 7.500h8M7 12h8" fill="none" stroke="#000" stroke-width="1.4" /><path d="M14 1l2 2-2 2zM14 5.500l2 2-2 2zM14 10l2 2-2 2z" fill="#000"/><rect x="0" y="6" width="7" height="3" fill="#000"/><path d="M2.500 4c0-3 4.500-3 4.500 0 0 1.500-2 1.500-2 3.500" fill="none" stroke="#ffff00" stroke-width="1.8" /><rect x="4" y="9" width="2" height="2" fill="#ffff00"/></svg><svg class="ic" style="left:477px;top:29px" width="16" height="15" viewBox="0 0 16 15"><rect x="2" y="1" width="12" height="13" fill="#00ffff"/><path d="M2.500 1.500h11v12h-11z" fill="none" stroke="#000080" stroke-width="1" /><path d="M5.500 5.500c0-3 5-3 5 0 0 2-2.500 1.500-2.500 3.500" fill="none" stroke="#0000ff" stroke-width="2" /><rect x="7" y="11" width="2" height="2" fill="#0000ff"/></svg><div class="sep" style="left:499px;top:28px"></div><svg class="ic" style="left:506px;top:29px" width="16" height="15" viewBox="0 0 16 15"><path d="M2 5h3l4-5v12l-4-3h-3z" fill="#a0a0a0"/><path d="M10 1h5M10 4h4M10 7h5M10 10h4M10 13h5" fill="none" stroke="#a0a0a0" stroke-width="1.2" /><circle cx="3" cy="12" r="2.3" fill="#f0f0f0" stroke="#a0a0a0" stroke-width="1.3"/></svg><svg class="ic" style="left:529px;top:29px" width="16" height="15" viewBox="0 0 16 15"><rect x="1" y="1" width="14" height="3" fill="#a0a0a0"/><rect x="6" y="1" width="9" height="10" fill="#a0a0a0"/><circle cx="3" cy="12" r="2.3" fill="#f0f0f0" stroke="#a0a0a0" stroke-width="1.3"/></svg><svg class="ic" style="left:552px;top:29px" width="16" height="15" viewBox="0 0 16 15"><path d="M3 8c0-4 3-6 6-6l3 3M13 7c0 4-3 6-6 5" fill="none" stroke="#a0a0a0" stroke-width="2.2" /><path d="M2 8l3-4 3 4zM10 3h5v5z" fill="#a0a0a0"/><circle cx="3" cy="12" r="2.3" fill="#f0f0f0" stroke="#a0a0a0" stroke-width="1.3"/></svg><svg class="ic" style="left:575px;top:29px" width="16" height="15" viewBox="0 0 16 15"><path d="M2 9v-5l4-4h6l3 3v11h-8v-5z" fill="#a0a0a0"/><rect x="7" y="5" width="2" height="4" fill="#f0f0f0"/><circle cx="3" cy="12" r="2.3" fill="#f0f0f0" stroke="#a0a0a0" stroke-width="1.3"/></svg><svg class="ic" style="left:598px;top:29px" width="16" height="15" viewBox="0 0 16 15"><path d="M8.500 0v7" fill="none" stroke="#a0a0a0" stroke-width="1.6" /><path d="M5 5h7l-3.500 5z" fill="#a0a0a0"/><circle cx="3" cy="12" r="2.3" fill="#f0f0f0" stroke="#a0a0a0" stroke-width="1.3"/></svg><svg class="ic" style="left:621px;top:29px" width="16" height="15" viewBox="0 0 16 15"><path d="M7 3h6M10 0v6M7 9h6" fill="none" stroke="#a0a0a0" stroke-width="1.4" /><circle cx="3" cy="12" r="2.3" fill="#f0f0f0" stroke="#a0a0a0" stroke-width="1.3"/></svg><div class="sep" style="left:643px;top:28px"></div><svg class="ic" style="left:650px;top:29px" width="16" height="15" viewBox="0 0 16 15"><circle cx="8" cy="7.5" r="6" fill="#ffff00" stroke="#000" stroke-width="1"/><rect x="7" y="0" width="2.500" height="15" fill="#000" transform="rotate(0 8 7.500)"/><rect x="7" y="0" width="2.500" height="15" fill="#000" transform="rotate(45 8 7.500)"/><rect x="7" y="0" width="2.500" height="15" fill="#000" transform="rotate(90 8 7.500)"/><rect x="7" y="0" width="2.500" height="15" fill="#000" transform="rotate(135 8 7.500)"/><circle cx="8" cy="7.5" r="4.5" fill="#ffff00"/><rect x="7.500" y="1" width="1.200" height="13" fill="#ff0" transform="rotate(22 8 7.500)"/><rect x="7.500" y="1" width="1.200" height="13" fill="#ff0" transform="rotate(67 8 7.500)"/><rect x="7.500" y="1" width="1.200" height="13" fill="#ff0" transform="rotate(112 8 7.500)"/><rect x="7.500" y="1" width="1.200" height="13" fill="#ff0" transform="rotate(157 8 7.500)"/><circle cx="8" cy="7.5" r="2.5" fill="#808000" stroke="#000" stroke-width="1"/><circle cx="8" cy="7.5" r="1" fill="#ffff00"/></svg><svg class="ic" style="left:673px;top:29px" width="16" height="15" viewBox="0 0 16 15"><path d="M3 2h4l1-1 1 1h4l2 2v5l-2 2h-4l-3 3v-3h-3l-2-2v-5z" fill="#ffff00"/><path d="M3.500 2.500h3.500l1-1 1 1h3.500l1.500 1.500v5l-1.500 1.500h-4.500l-2.500 2.500" fill="none" stroke="#000" stroke-width="1" /><path d="M3.500 2.500l-1.500 1.500v5l1.500 1.500h2.500" fill="none" stroke="#000" stroke-width="1" /><rect x="5" y="5" width="1" height="2" fill="#000"/><rect x="10" y="5" width="1" height="2" fill="#000"/><path d="M5 8.500c2 1.500 4 1.500 6 0" fill="none" stroke="#000" stroke-width="1" /></svg><svg class="ic" style="left:696px;top:29px" width="16" height="15" viewBox="0 0 16 15"><path d="M1 6l9-5 5 8-9 5z" fill="#fff"/><path d="M2 6l8-4 4 6-8 4z" fill="#ffff80"/><path d="M1.500 6l8.500-4.500" fill="none" stroke="#000" stroke-width="1" /><path d="M1.500 6l3 8" fill="none" stroke="#000" stroke-width="1.2" /><path d="M5 7l5-2.500M6 9l5-2.500M7 11l5-2.500" fill="none" stroke="#a0a0a0" stroke-width="0.8" /><path d="M4.500 14l1.500-1" fill="none" stroke="#ffff00" stroke-width="1.5" /></svg><svg class="ic" style="left:719px;top:29px" width="16" height="15" viewBox="0 0 16 15"><path d="M1 14l9-10" fill="none" stroke="#000" stroke-width="2.2" /><path d="M1.500 13.500l8-9" fill="none" stroke="#ff0000" stroke-width="0.8" /><path d="M6 2l3-2 4 2 3 3-2 2-2-2-3 1z" fill="#808000"/><path d="M6 2l3-2" fill="none" stroke="#000" stroke-width="1" /></svg><svg class="ic" style="left:742px;top:29px" width="16" height="15" viewBox="0 0 16 15"><path d="M1 6l5-2 9 3-6 7-7-3z" fill="#fff"/><path d="M1.500 6l4.500-2 8.500 3-5.500 6.500-7-3z" fill="none" stroke="#000" stroke-width="1.2" /><rect x="0" y="6" width="2" height="3" fill="#000080"/><path d="M3 0l8 8" fill="none" stroke="#000" stroke-width="1.6" /><path d="M4 1.500l6 6" fill="none" stroke="#ffff00" stroke-width="0.8" /><path d="M8 13l2-1M14 7l-2 1" fill="none" stroke="#ffff00" stroke-width="1.2" /></svg><svg class="ic" style="left:765px;top:29px" width="16" height="15" viewBox="0 0 16 15"><rect x="1" y="1" width="13" height="13" fill="#fff"/><path d="M1.500 1.500h12v12h-12zM5.500 1.500v12M9.500 1.500v12M1.500 5.500h12M1.500 9.500h12" fill="none" stroke="#c0c0c0" stroke-width="1" /><path d="M6 12l1-3 5-5 2 2-5 5z" fill="#00ff00"/><path d="M7.500 9.500l5-5" fill="none" stroke="#808080" stroke-width="1" /><circle cx="13" cy="5" r="1.8" fill="#ff0000"/><path d="M6 12l1-3 2 2z" fill="#808000"/></svg><div class="sep" style="left:787px;top:28px"></div><svg class="ic" style="left:794px;top:29px" width="16" height="15" viewBox="0 0 16 15"><path d="M5 5c0-6 9-6 9-1v3l-2 1v3l-5 1z" fill="#000"/><path d="M9 4h4l2 3-1 1v3h-3l-2-2z" fill="#fff"/><path d="M13.500 4l1.500 3-1 1v2.500" fill="none" stroke="#000" stroke-width="0.8" /><rect x="13" y="5" width="1" height="1" fill="#0000ff"/><path d="M8 12h8v3h-8z" fill="#0000ff"/><rect x="11" y="11" width="3" height="2" fill="#fff"/><rect x="0" y="8" width="7" height="7" fill="#fff"/><path d="M0.5 8.5h6v6h-6z" fill="none" stroke="#000" stroke-width="1" /><rect x="0" y="14" width="8" height="1" fill="#000"/><path d="M2 13l3-3M3 10h3v3" fill="#000"/><path d="M2 13l3.5-3.5M3 9.5h3v3" fill="none" stroke="#000" stroke-width="1" /></svg><svg class="ic" style="left:817px;top:29px" width="16" height="15" viewBox="0 0 16 15"><rect x="5" y="1" width="10" height="10" fill="#a0a0a0"/><rect x="1" y="1" width="12" height="1" fill="#000"/><rect x="2" y="2" width="2" height="1" fill="#000"/><rect x="6" y="4" width="2" height="1" fill="#000"/><rect x="9" y="4" width="2" height="1" fill="#000"/><rect x="12" y="4" width="2" height="1" fill="#000"/><path d="M8 8l2 1 3-3" fill="none" stroke="#000" stroke-width="1.2" /><rect x="0" y="8" width="7" height="7" fill="#fff"/><path d="M0.5 8.5h6v6h-6z" fill="none" stroke="#000" stroke-width="1" /><rect x="0" y="14" width="8" height="1" fill="#000"/><path d="M2 13l3-3M3 10h3v3" fill="#000"/><path d="M2 13l3.5-3.5M3 9.5h3v3" fill="none" stroke="#000" stroke-width="1" /></svg><svg class="ic" style="left:840px;top:29px" width="16" height="15" viewBox="0 0 16 15"><path d="M8 0c0 6 2 9 7 10" fill="none" stroke="#000" stroke-width="3" /><path d="M8.500 0c0 5 2 8 6 9.500" fill="none" stroke="#ffff00" stroke-width="1.2" /><path d="M10 0h3v3h-3zM12 7h4v4h-3z" fill="#000"/><path d="M0 0l15 15" fill="none" stroke="#000" stroke-width="1" /><rect x="0" y="8" width="7" height="7" fill="#fff"/><path d="M0.5 8.5h6v6h-6z" fill="none" stroke="#000" stroke-width="1" /><rect x="0" y="14" width="8" height="1" fill="#000"/><path d="M2 13l3-3M3 10h3v3" fill="#000"/><path d="M2 13l3.5-3.5M3 9.5h3v3" fill="none" stroke="#000" stroke-width="1" /></svg><svg class="ic" style="left:863px;top:29px" width="16" height="15" viewBox="0 0 16 15"><rect x="5" y="5" width="7" height="4" fill="#a0a0a0"/><path d="M4.500 4.500h8v5" fill="none" stroke="#000" stroke-width="1.2" /><rect x="8" y="0" width="4" height="3" fill="#ff0000"/><rect x="11" y="0" width="1" height="8" fill="#ff0000"/><rect x="10" y="9" width="1" height="6" fill="#000"/><path d="M12 9l3 4" fill="none" stroke="#000" stroke-width="2" /><path d="M13.500 11l1.500 2" fill="none" stroke="#a0a0a0" stroke-width="1.2" /><rect x="0" y="8" width="7" height="7" fill="#fff"/><path d="M0.5 8.5h6v6h-6z" fill="none" stroke="#000" stroke-width="1" /><rect x="0" y="14" width="8" height="1" fill="#000"/><path d="M2 13l3-3M3 10h3v3" fill="#000"/><path d="M2 13l3.5-3.5M3 9.5h3v3" fill="none" stroke="#000" stroke-width="1" /></svg><svg class="ic" style="left:886px;top:29px" width="16" height="15" viewBox="0 0 16 15"><path d="M2 8c0-8 8-8 9-4l-3 4z" fill="#ffff00"/><path d="M2.500 8c0-7 7-7 8-4" fill="none" stroke="#000" stroke-width="1.2" /><path d="M8 4c1-4 8-4 8 2v8h-8z" fill="#000"/><path d="M8 5h3v5h-3z" fill="#fff"/><path d="M11 4h3l1 4-1 3h-3z" fill="#a0a0a0"/><rect x="12" y="3" width="1" height="8" fill="#fff"/><rect x="8" y="13" width="2" height="2" fill="#ff00ff"/><rect x="11" y="13" width="2" height="2" fill="#00ffff"/><rect x="0" y="8" width="7" height="7" fill="#fff"/><path d="M0.5 8.5h6v6h-6z" fill="none" stroke="#000" stroke-width="1" /><rect x="0" y="14" width="8" height="1" fill="#000"/><path d="M2 13l3-3M3 10h3v3" fill="#000"/><path d="M2 13l3.5-3.5M3 9.5h3v3" fill="none" stroke="#000" stroke-width="1" /></svg><svg class="ic" style="left:909px;top:29px" width="16" height="15" viewBox="0 0 16 15"><rect x="7" y="1" width="9" height="1" fill="#000"/><rect x="9" y="3" width="7" height="1" fill="#000"/><rect x="9" y="5" width="7" height="1" fill="#000"/><rect x="9" y="7" width="7" height="1" fill="#000"/><rect x="9" y="9" width="7" height="1" fill="#000"/><rect x="8" y="3" width="2" height="1" fill="#a0a0a0"/><rect x="8" y="5" width="2" height="1" fill="#a0a0a0"/><path d="M0 0l15 15" fill="none" stroke="#000" stroke-width="1" /><rect x="0" y="8" width="7" height="7" fill="#fff"/><path d="M0.5 8.5h6v6h-6z" fill="none" stroke="#000" stroke-width="1" /><rect x="0" y="14" width="8" height="1" fill="#000"/><path d="M2 13l3-3M3 10h3v3" fill="#000"/><path d="M2 13l3.5-3.5M3 9.5h3v3" fill="none" stroke="#000" stroke-width="1" /></svg></div>
<div class="abs" style="left:0;top:96px;width:196px;height:1px;background:#a0a0a0"></div><div class="abs" style="left:0;top:97px;width:195px;height:1px;background:#696969"></div><div id="tree" class="abs"><div class="vd" style="left:31px;top:18px;height:3px"></div><div class="vd" style="left:56px;top:35px;height:24px"></div><div class="vd" style="left:81px;top:71px;height:209px"></div><div class="exp" style="left:1px;top:5px"><i></i></div><div class="hd" style="left:13px;top:10px;width:8px"></div><svg class="ic" style="left:26px;top:1px" width="16" height="16" viewBox="0 0 16 16"><path d="M2 1l1-1h10l1 1v9h-12z" fill="#c0c0c0"/><path d="M2.500 9.500v-8l1-1h9l1 1" fill="none" stroke="#808080" stroke-width="1" /><rect x="4" y="2" width="8" height="6" fill="#fff"/><rect x="5" y="3" width="6" height="4" fill="#0000ff"/><rect x="5" y="3" width="2" height="1" fill="#fff"/><rect x="13" y="1" width="1" height="9" fill="#000"/><rect x="3" y="9" width="10" height="1" fill="#000"/><rect x="1" y="10" width="14" height="5" fill="#fff"/><path d="M1.500 14v-3.500h12" fill="none" stroke="#808080" stroke-width="1" /><rect x="3" y="12" width="2" height="1" fill="#00ff00"/><rect x="7" y="12" width="5" height="1" fill="#000"/><rect x="1" y="14" width="14" height="1" fill="#000"/><rect x="2" y="15" width="13" height="1" fill="#808080"/><rect x="14" y="10" width="1" height="5" fill="#000"/><rect x="15" y="9" width="1" height="5" fill="#000"/></svg><div class="t sg" style="left:47px;top:2px;line-height:15px;letter-spacing:-0.105px">LUCKY - Inbound Call Configuration</div><div class="exp" style="left:26px;top:23px"><i></i></div><div class="hd" style="left:38px;top:28px;width:8px"></div><svg class="ic" style="left:51px;top:19px" width="16" height="16" viewBox="0 0 16 16"><rect x="0" y="0" width="16" height="16" fill="#f4fff0"/><path d="M.5 .5h15v15h-15z" fill="none" stroke="#00e000" stroke-width="1" /><path d="M2 9l6-4 6 3v3l-6 3-6-2z" fill="#ffff00"/><path d="M2.500 9v3l5.500 2.500 6-3.500" fill="none" stroke="#808000" stroke-width="1" /><path d="M3 4l3-3 8 6-2 3z" fill="#ffff00"/><path d="M3 4l3-3 8 6" fill="none" stroke="#000" stroke-width="1" /><path d="M6 5l4 3M5 9l3 1.500" fill="none" stroke="#000" stroke-width="1" /></svg><div class="t sg" style="left:72px;top:20px;line-height:15px;letter-spacing:-0.03px">Default Profile</div><div class="exp" style="left:51px;top:41px"><i></i><b></b></div><div class="hd" style="left:63px;top:46px;width:8px"></div><svg class="ic" style="left:76px;top:37px" width="16" height="16" viewBox="0 0 16 16"><rect x="0" y="0" width="16" height="16" fill="#fff"/><path d="M.5 .5h15v15h-15z" fill="none" stroke="#00e000" stroke-width="1" /><rect x="1" y="2" width="14" height="12" fill="#000"/><rect x="3" y="3" width="1" height="1" fill="#fff"/><rect x="5" y="3" width="1" height="1" fill="#fff"/><rect x="7" y="3" width="1" height="1" fill="#fff"/><rect x="9" y="3" width="1" height="1" fill="#fff"/><rect x="11" y="3" width="1" height="1" fill="#fff"/><rect x="13" y="3" width="1" height="1" fill="#fff"/><rect x="3" y="5" width="1" height="1" fill="#fff"/><rect x="5" y="5" width="1" height="1" fill="#fff"/><rect x="7" y="5" width="1" height="1" fill="#fff"/><rect x="9" y="5" width="1" height="1" fill="#fff"/><rect x="11" y="5" width="1" height="1" fill="#fff"/><rect x="13" y="5" width="1" height="1" fill="#fff"/><rect x="3" y="10" width="1" height="1" fill="#fff"/><rect x="5" y="10" width="1" height="1" fill="#fff"/><rect x="7" y="10" width="1" height="1" fill="#fff"/><rect x="9" y="10" width="1" height="1" fill="#fff"/><rect x="11" y="10" width="1" height="1" fill="#fff"/><rect x="13" y="10" width="1" height="1" fill="#fff"/><rect x="3" y="12" width="1" height="1" fill="#fff"/><rect x="5" y="12" width="1" height="1" fill="#fff"/><rect x="7" y="12" width="1" height="1" fill="#fff"/><rect x="9" y="12" width="1" height="1" fill="#fff"/><rect x="11" y="12" width="1" height="1" fill="#fff"/><rect x="13" y="12" width="1" height="1" fill="#fff"/><rect x="2" y="7" width="12" height="1" fill="#fff"/></svg><div class="t sg" style="left:97px;top:38px;line-height:15px;letter-spacing:-0.15px">Default Schedule</div><div class="exp" style="left:51px;top:59px"><i></i></div><div class="hd" style="left:63px;top:64px;width:8px"></div><svg class="ic" style="left:76px;top:55px" width="16" height="16" viewBox="0 0 16 16"><rect x="0" y="1" width="16" height="14" fill="#000"/><rect x="2" y="3" width="1" height="1" fill="#fff"/><rect x="4" y="3" width="1" height="1" fill="#fff"/><rect x="6" y="3" width="1" height="1" fill="#fff"/><rect x="8" y="3" width="1" height="1" fill="#fff"/><rect x="10" y="3" width="1" height="1" fill="#fff"/><rect x="12" y="3" width="1" height="1" fill="#fff"/><rect x="2" y="5" width="1" height="1" fill="#fff"/><rect x="4" y="5" width="1" height="1" fill="#fff"/><rect x="6" y="5" width="1" height="1" fill="#fff"/><rect x="8" y="5" width="1" height="1" fill="#fff"/><rect x="10" y="5" width="1" height="1" fill="#fff"/><rect x="12" y="5" width="1" height="1" fill="#fff"/><rect x="2" y="10" width="1" height="1" fill="#fff"/><rect x="4" y="10" width="1" height="1" fill="#fff"/><rect x="6" y="10" width="1" height="1" fill="#fff"/><rect x="8" y="10" width="1" height="1" fill="#fff"/><rect x="10" y="10" width="1" height="1" fill="#fff"/><rect x="12" y="10" width="1" height="1" fill="#fff"/><rect x="2" y="12" width="1" height="1" fill="#fff"/><rect x="4" y="12" width="1" height="1" fill="#fff"/><rect x="6" y="12" width="1" height="1" fill="#fff"/><rect x="8" y="12" width="1" height="1" fill="#fff"/><rect x="10" y="12" width="1" height="1" fill="#fff"/><rect x="12" y="12" width="1" height="1" fill="#fff"/><rect x="1" y="7" width="14" height="1" fill="#fff"/></svg><div class="t sg" style="left:97px;top:56px;line-height:15px;letter-spacing:0.03px">Monday - Friday</div><div class="hd" style="left:81px;top:82px;width:14px"></div><div class="key" style="left:101px;top:73px;"><span>0</span></div><div class="t sg" style="left:122px;top:74px;line-height:15px;letter-spacing:-0.32px">Escape to Operator</div><div class="exp" style="left:76px;top:95px"><i></i><b></b></div><div class="hd" style="left:88px;top:100px;width:8px"></div><div class="key" style="left:101px;top:91px;"><span>1</span></div><div class="t sg" style="left:122px;top:92px;line-height:15px;letter-spacing:-0.07px">Dialing an Extension</div><div class="hd" style="left:81px;top:118px;width:14px"></div><div class="key" style="left:101px;top:109px;"><span>2</span></div><div class="t sg" style="left:122px;top:110px;line-height:15px;letter-spacing:0px">Dialing by Name</div><div class="exp" style="left:76px;top:131px"><i></i><b></b></div><div class="hd" style="left:88px;top:136px;width:8px"></div><div class="key" style="left:101px;top:127px;"><span>9</span></div><div class="t sg" style="left:122px;top:128px;line-height:15px;letter-spacing:-0.12px">Extended Menu</div><div class="hd" style="left:81px;top:154px;width:14px"></div><div class="key" style="left:101px;top:145px;"><span class="ast">✱</span></div><div class="t sg" style="left:122px;top:146px;line-height:15px;letter-spacing:-0.32px">Escape to Main Menu</div><div class="hd" style="left:81px;top:172px;width:14px"></div><div class="key" style="left:101px;top:163px;"></div><div class="t sg" style="left:122px;top:164px;line-height:15px;letter-spacing:-0.24px">Caller Data Entry</div><div class="hd" style="left:81px;top:190px;width:14px"></div><div class="key" style="left:101px;top:181px;border-color:#00e000;"></div><div class="t sg" style="left:122px;top:182px;line-height:15px;letter-spacing:-0.12px">Disconnect (No Action)</div><div class="hd" style="left:81px;top:208px;width:14px"></div><div class="key" style="left:101px;top:199px;"></div><div class="t sg" style="left:122px;top:200px;line-height:15px;letter-spacing:-0.12px">Logical Transfer</div><div class="hd" style="left:81px;top:226px;width:14px"></div><div class="key" style="left:101px;top:217px;"></div><div class="t sg" style="left:122px;top:218px;line-height:15px;letter-spacing:-0.2px">Play Info1</div><div class="hd" style="left:81px;top:244px;width:14px"></div><div class="key" style="left:101px;top:235px;"></div><div class="t sg" style="left:122px;top:236px;line-height:15px;letter-spacing:-0.05px">Set Attribute1</div><div class="hd" style="left:81px;top:262px;width:14px"></div><div class="key" style="left:101px;top:253px;"></div><div class="t sg" style="left:122px;top:254px;line-height:15px;letter-spacing:-0.12px">Subroutine Initiator</div><div class="hd" style="left:81px;top:280px;width:14px"></div><div class="key" style="left:101px;top:271px;"></div><div class="sel" style="left:120px;top:270px;"><span class="sg" style="letter-spacing:0.0px">Voicebot1</span></div></div>
<div id="right" class="abs"><div class="abs" style="left:0;top:0;width:736px;height:1px;background:#a0a0a0"></div>
<div class="abs" style="left:0;top:1px;width:736px;height:1px;background:#696969"></div>
<div class="abs" style="left:0;top:0;width:1px;height:734px;background:#a0a0a0"></div>
<div class="abs" style="left:1px;top:1px;width:1px;height:733px;background:#696969"></div>
<div class="t" style="left:19px;top:11.5px;line-height:24px;letter-spacing:-0.085px;font-family:'Liberation Serif',serif;font-size:21px;">Voicebot1</div>
<div class="t th" style="left:13px;top:45px;line-height:13px;letter-spacing:-0.024px;">Voicebot - Allow a voicebot to take over the processing of this interaction</div>
<div class="grp" style="left:13px;top:88px;width:459px;height:180px;"><div class="lbl" style="letter-spacing:-0.205px;">Node Characteristics</div></div>
<div class="t th" style="left:22.5px;top:104px;line-height:13px;letter-spacing:-0.380px;"><u>N</u>ame:</div>
<div class="sunk" style="left:68px;top:98px;width:391px;height:20px;background:#fff;overflow:hidden;"><div class="t th" style="left:4px;top:3px;line-height:13px;letter-spacing:-0.146px;">Voicebot1</div></div>
<div class="t th" style="left:22.5px;top:130px;line-height:13px;letter-spacing:-0.094px;"><u>D</u>igit:</div>
<div class="sunk" style="left:68px;top:126px;width:391px;height:23px;background:#fff;overflow:hidden;"><div class="key" style="left:8px;top:3px"></div><div class="t sg" style="left:29px;top:5px;line-height:15px;letter-spacing:-0.034px;">&lt;None&gt;</div></div>
<div class="btn" style="left:440px;top:128px;width:17px;height:20px;"><div class="abs" style="left:4px;top:8px;width:0;height:0;border:4px solid transparent;border-top:4px solid #000;border-bottom:0;"></div></div>
<div class="cb" style="left:23px;top:156px;"><svg class="abs" style="left:1px;top:1px" width="9" height="9" viewBox="0 0 9 9"><path d="M1 3v3l2 2 5-5V0L3 5z" fill="#000"/></svg></div>
<div class="t th" style="left:41px;top:157px;line-height:13px;letter-spacing:-0.159px;">Ac<u>t</u>ive</div>
<div class="cb" style="left:23px;top:177px;"></div>
<div class="t th" style="left:41px;top:178px;line-height:13px;letter-spacing:-0.106px;">Default <u>A</u>ction</div>
<div class="cb" style="left:23px;top:198px;"></div>
<div class="t th" style="left:41px;top:199px;line-height:13px;letter-spacing:-0.206px;">Enable I<u>V</u>R reporting</div>
<div class="cb" style="left:23px;top:219px;"></div>
<div class="t th" style="left:41px;top:220px;line-height:13px;letter-spacing:0.047px;">Add entr<u>y</u> to the Interaction Log</div>
<div class="btn" style="left:23px;top:238px;width:177px;height:23px;"><span style="top:4px;margin-left:-3.0px;letter-spacing:-0.109px;">Configure Speech Recognition...</span></div>
<div class="grp" style="left:13px;top:289px;width:457px;height:133px;"><div class="lbl" style="letter-spacing:-0.213px;">Voicebot</div></div>
<div class="t th" style="left:23px;top:305px;line-height:13px;letter-spacing:0.127px;"><u>I</u>ntegration ID:</div>
<div class="sunk" style="left:137px;top:299px;width:321px;height:23px;overflow:hidden;"><div class="t th" style="left:4.5px;top:3px;line-height:13px;letter-spacing:-0.096px;">Second Project Name (3e38562d-b8cb-4147-b3d6-78c595905003)</div></div>
<div class="t th" style="left:23px;top:334px;line-height:13px;letter-spacing:-0.109px;"><u>V</u>oicebot ID:</div>
<div class="sunk" style="left:137px;top:329px;width:321px;height:23px;overflow:hidden;"><div class="t th" style="left:4.5px;top:3px;line-height:13px;letter-spacing:-0.111px;">Second Agent (3e38562d-b8cb-4147-b3d6-78c595905002)</div></div>
<div class="t th" style="left:23px;top:364px;line-height:13px;letter-spacing:-0.177px;">Voicebot Version:</div>
<div class="sunk" style="left:137px;top:358px;width:321px;height:23px;overflow:hidden;"><div class="t th" style="left:5.5px;top:3px;line-height:13px;letter-spacing:-0.052px;">&lt;Not Specified&gt;</div></div>
<div class="btn" style="left:137px;top:392px;width:75px;height:23px;"><span style="top:3px;margin-left:-1.0px;letter-spacing:0.084px;">S<u>e</u>lect...</span></div>
<div class="btn" style="left:217px;top:392px;width:75px;height:23px;"><span style="top:3px;margin-left:0px;letter-spacing:-0.229px;">Details...</span></div>
<div class="grp" style="left:13px;top:435px;width:457px;height:156px;"><div class="lbl" style="letter-spacing:0.119px;">Voicebot Inputs</div></div>
<div class="sunk" id="list" style="left:23px;top:448px;width:345px;height:132px;background:#fff;overflow:hidden;"><div class="abs" style="left:1px;top:1px;width:342px;height:15px;background:#f0f0f0;"></div><div class="abs hdc" style="left:1px;top:1px;width:112px;height:16px;"></div><div class="abs hdc" style="left:113px;top:1px;width:80px;height:16px;"></div><div class="abs hdc" style="left:193px;top:1px;width:143px;height:16px;"></div><div class="abs" id="grid" style="left:1px;top:17px;width:342px;height:114px;"></div><div class="t th" style="left:6px;top:3px;line-height:13px;letter-spacing:-0.586px;">Name</div><div class="t th" style="left:118px;top:3px;line-height:13px;letter-spacing:-0.172px;">Value Type</div><div class="t th" style="left:198px;top:3px;line-height:13px;letter-spacing:-0.063px;">Value</div><div class="t th" style="left:6px;top:20px;line-height:13px;letter-spacing:0.109px;">|\name1\x42|</div><div class="t th" style="left:118px;top:20px;line-height:13px;letter-spacing:0.457px;">Text</div><div class="t th" style="left:198px;top:20px;line-height:13px;letter-spacing:0.113px;">|\valule1\x42|</div><div class="t th" style="left:6px;top:34px;line-height:13px;letter-spacing:0.109px;">|\name2\x42|</div><div class="t th" style="left:118px;top:34px;line-height:13px;letter-spacing:0.171px;">Attribute</div><div class="t th" style="left:198px;top:34px;line-height:13px;letter-spacing:0.175px;">|\value2\x42|</div></div>
<div class="btn" style="left:382px;top:446px;width:75px;height:23px;"><span style="top:4px;margin-left:0px;letter-spacing:-0.441px;">Add</span></div>
<div class="btn" style="left:382px;top:473px;width:75px;height:23px;color:#a0a0a0;"><span style="top:4px;margin-left:0px;letter-spacing:-0.285px;">Remove</span></div>
<div class="btn" style="left:382px;top:501px;width:75px;height:23px;color:#a0a0a0;"><span style="top:4px;margin-left:0px;letter-spacing:-0.551px;">Edit</span></div>
<div class="grp" style="left:13px;top:614px;width:456px;height:113px;"><div class="lbl" style="letter-spacing:-0.200px;">Action When Finished</div></div>
<div class="rd" style="left:25px;top:625px;"><div class="abs" style="left:3px;top:3px;width:4px;height:4px;border-radius:50%;background:#000;"></div></div>
<div class="t th" style="left:41.5px;top:626px;line-height:13px;letter-spacing:-0.134px;"><u>G</u>o back to the previous menu</div>
<div class="rd" style="left:25px;top:643px;"></div>
<div class="t th" style="left:41.5px;top:644px;line-height:13px;letter-spacing:-0.241px;">D<u>i</u>sconnect</div>
<div class="rd" style="left:25px;top:661px;"></div>
<div class="t th" style="left:41.5px;top:662px;line-height:13px;letter-spacing:-0.055px;">Transfer to Operator Processing</div>
<div class="rd" style="left:25px;top:679px;"></div>
<div class="t th" style="left:41.5px;top:680px;line-height:13px;letter-spacing:-0.161px;"><u>J</u>ump to a custom location</div>
<div class="sunk" style="left:42px;top:697px;width:413px;height:23px;overflow:hidden;"></div>
<div class="btn" style="left:437px;top:699px;width:17px;height:20px;"><div class="abs" style="left:4px;top:8px;width:0;height:0;border:4px solid transparent;border-top:4px solid #a0a0a0;border-bottom:0;"></div></div></div>
</body>
</html>
